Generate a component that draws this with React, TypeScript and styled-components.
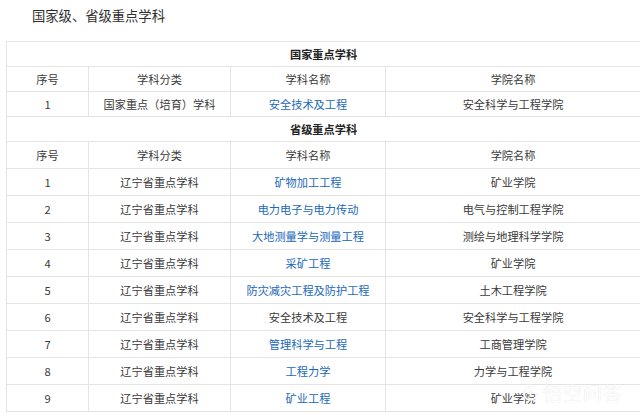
import React from "react";
import styled, { createGlobalStyle } from "styled-components";

const GlobalStyle = createGlobalStyle`
  html, body {
    margin: 0;
    padding: 0;
    background: #ffffff;
  }
  body {
    font-family: "Noto Sans CJK SC", "Noto Sans", "Liberation Sans", sans-serif;
    color: #333333;
  }
`;

const Page = styled.div`
  position: relative;
  width: 640px;
  height: 413px;
  overflow: hidden;
  background: #ffffff;
`;

const Title = styled.h2`
  margin: 0;
  padding: 7px 0 0 32px;
  height: 41px;
  box-sizing: border-box;
  font-size: 13.3px;
  line-height: 17px;
  font-weight: 400;
  color: #2e2e2e;
`;

const Table = styled.table`
  margin-left: 6px;
  width: 634px;
  border-collapse: collapse;
  table-layout: fixed;
  font-size: 11.2px;
`;

const Row = styled.tr<{ $h: number }>`
  height: ${(p) => p.$h}px;
`;

const Cell = styled.td<{ $bold?: boolean; $link?: boolean }>`
  border: 1px solid #e4e4e4;
  padding: 0;
  text-align: center;
  vertical-align: middle;
  line-height: 14px;
  white-space: nowrap;
  color: ${(p) => (p.$link ? "#2168b8" : p.$bold ? "#222222" : "#3a3a3a")};
  font-weight: ${(p) => (p.$bold ? 700 : 400)};
`;

const Watermark = styled.div`
  position: absolute;
  left: 522px;
  top: 382px;
  display: flex;
  align-items: center;
  gap: 4px;
  font-size: 19px;
  line-height: 22px;
  letter-spacing: 1px;
  color: rgba(255, 255, 255, 0.97);
  text-shadow: 0 0 1px rgba(180, 180, 180, 0.45);
  pointer-events: none;
`;

type Item = { no: string; cat: string; name: string; link: boolean; college: string };

const national: Item[] = [
  { no: "1", cat: "国家重点（培育）学科", name: "安全技术及工程", link: true, college: "安全科学与工程学院" },
];

const provincial: Item[] = [
  { no: "1", cat: "辽宁省重点学科", name: "矿物加工工程", link: true, college: "矿业学院" },
  { no: "2", cat: "辽宁省重点学科", name: "电力电子与电力传动", link: true, college: "电气与控制工程学院" },
  { no: "3", cat: "辽宁省重点学科", name: "大地测量学与测量工程", link: true, college: "测绘与地理科学学院" },
  { no: "4", cat: "辽宁省重点学科", name: "采矿工程", link: true, college: "矿业学院" },
  { no: "5", cat: "辽宁省重点学科", name: "防灾减灾工程及防护工程", link: true, college: "土木工程学院" },
  { no: "6", cat: "辽宁省重点学科", name: "安全技术及工程", link: false, college: "安全科学与工程学院" },
  { no: "7", cat: "辽宁省重点学科", name: "管理科学与工程", link: true, college: "工商管理学院" },
  { no: "8", cat: "辽宁省重点学科", name: "工程力学", link: true, college: "力学与工程学院" },
  { no: "9", cat: "辽宁省重点学科", name: "矿业工程", link: true, college: "矿业学院" },
];

function Section({ title, items, h, headH }: { title: string; items: Item[]; h: number; headH: number }) {
  return (
    <>
      <Row $h={25}>
        <Cell colSpan={4} $bold>
          {title}
        </Cell>
      </Row>
      <Row $h={headH}>
        <Cell>序号</Cell>
        <Cell>学科分类</Cell>
        <Cell>学科名称</Cell>
        <Cell>学院名称</Cell>
      </Row>
      {items.map((it) => (
        <Row $h={h} key={title + it.no}>
          <Cell>{it.no}</Cell>
          <Cell>{it.cat}</Cell>
          <Cell $link={it.link}>{it.name}</Cell>
          <Cell>{it.college}</Cell>
        </Row>
      ))}
    </>
  );
}

export default function App() {
  return (
    <>
      <GlobalStyle />
      <Page>
        <Title>国家级、省级重点学科</Title>
        <Table>
          <colgroup>
            <col style={{ width: 82 }} />
            <col style={{ width: 142 }} />
            <col style={{ width: 155 }} />
            <col style={{ width: 255 }} />
          </colgroup>
          <tbody>
            <Section title="国家重点学科" items={national} h={25} headH={25} />
            <Section title="省级重点学科" items={provincial} h={27} headH={27} />
          </tbody>
        </Table>
        <Watermark>
          <svg width="17" height="17" viewBox="0 0 16 16">
            <path
              d="M8 2 C4 2 2 5 2 8 C2 11 4 14 8 14 C12 14 14 11 14 8 M5 8 L11 8 M8 5 L8 11"
              fill="none"
              stroke="rgba(255,255,255,0.97)"
              strokeWidth="1.6"
              style={{ filter: "drop-shadow(0 0 0.6px rgba(170,170,170,0.55))" }}
            />
          </svg>
          <span>悟空问答</span>
        </Watermark>
      </Page>
    </>
  );
}
